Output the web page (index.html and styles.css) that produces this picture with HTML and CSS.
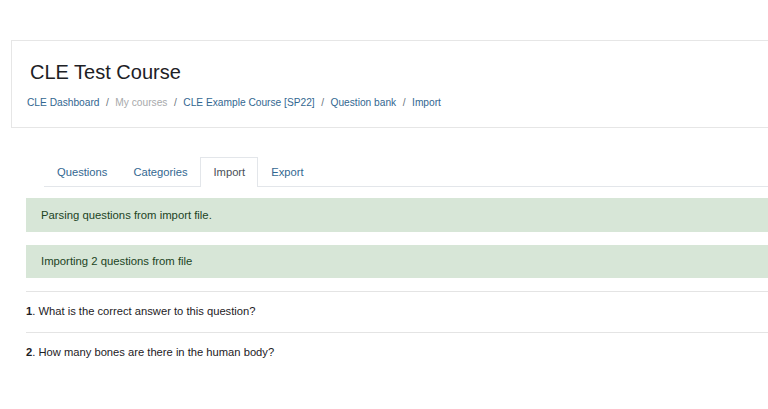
FILE: index.html
```html
<!DOCTYPE html>
<html>
<head>
<meta charset="utf-8">
<link rel="stylesheet" href="styles.css">
</head>
<body>
<div class="page">
  <header class="course-header">
    <h1 class="title">CLE Test Course</h1>
    <nav class="crumbs">
      <a class="link">CLE Dashboard</a><span class="sep">/</span>
      <span class="muted">My courses</span><span class="sep">/</span>
      <a class="link">CLE Example Course [SP22]</a><span class="sep">/</span>
      <a class="link">Question bank</a><span class="sep">/</span>
      <a class="link">Import</a>
    </nav>
  </header>
  <main class="content">
    <ul class="tabs">
      <li class="tab">Questions</li>
      <li class="tab">Categories</li>
      <li class="tab active">Import</li>
      <li class="tab">Export</li>
    </ul>
    <div class="alert">Parsing questions from import file.</div>
    <div class="alert">Importing 2 questions from file</div>
    <div class="questions">
      <div class="q"><b>1</b>. What is the correct answer to this question?</div>
      <div class="q"><b>2</b>. How many bones are there in the human body?</div>
    </div>
  </main>
</div>
</body>
</html>
```
FILE: styles.css
```css
html, body { margin: 0; padding: 0; background: #fff; }
body {
  font-family: "Liberation Sans", Arial, sans-serif;
  color: #1d2125;
  overflow: hidden;
  width: 768px;
  height: 409px;
}
.page { padding-top: 40px; }
.course-header {
  margin-left: 11px;
  width: 800px;
  height: 88px;
  box-sizing: border-box;
  border: 1px solid #e6e6e6;
  padding: 18px 0 0 18px;
}
.title {
  margin: 0;
  font-size: 20px;
  font-weight: 400;
  line-height: 26px;
  color: #1d2125;
}
.crumbs {
  margin-top: 11px;
  margin-left: -3px;
  font-size: 10.2px;
  line-height: 14px;
  display: flex;
  align-items: center;
}
.link { color: #336791; text-decoration: none; }
.muted { color: #a7a9ab; }
.sep { color: #6a737b; margin: 0 6.5px; }
.content { margin-left: 26px; padding-top: 29px; }
.tabs {
  list-style: none;
  margin: 0 0 0 18px;
  padding: 0;
  display: flex;
  border-bottom: 1px solid #e3e6ea;
  height: 29px;
}
.tab {
  padding: 0 12px;
  font-size: 11.2px;
  line-height: 29px;
  color: #336791;
  border: 1px solid transparent;
  border-bottom: none;
  margin-bottom: -1px;
}
.tab.active {
  color: #495057;
  background: #fff;
  border-color: #e3e6ea;
  height: 29px;
  padding: 0 12px;
}
.alert {
  margin-top: 11px;
  height: 34px;
  box-sizing: border-box;
  background: #d7e6d7;
  color: #21441f;
  font-size: 11.3px;
  padding-left: 15px;
  line-height: 34px;
  width: 800px;
}
.alert + .alert { margin-top: 13px; height: 33px; line-height: 33px; }
.questions { margin-top: 13px; }
.q {
  border-top: 1px solid #e4e4e4;
  height: 40px;
  line-height: 39px;
  font-size: 11.2px;
  color: #1d2125;
  width: 800px;
}
.q b { font-weight: 700; }
```
